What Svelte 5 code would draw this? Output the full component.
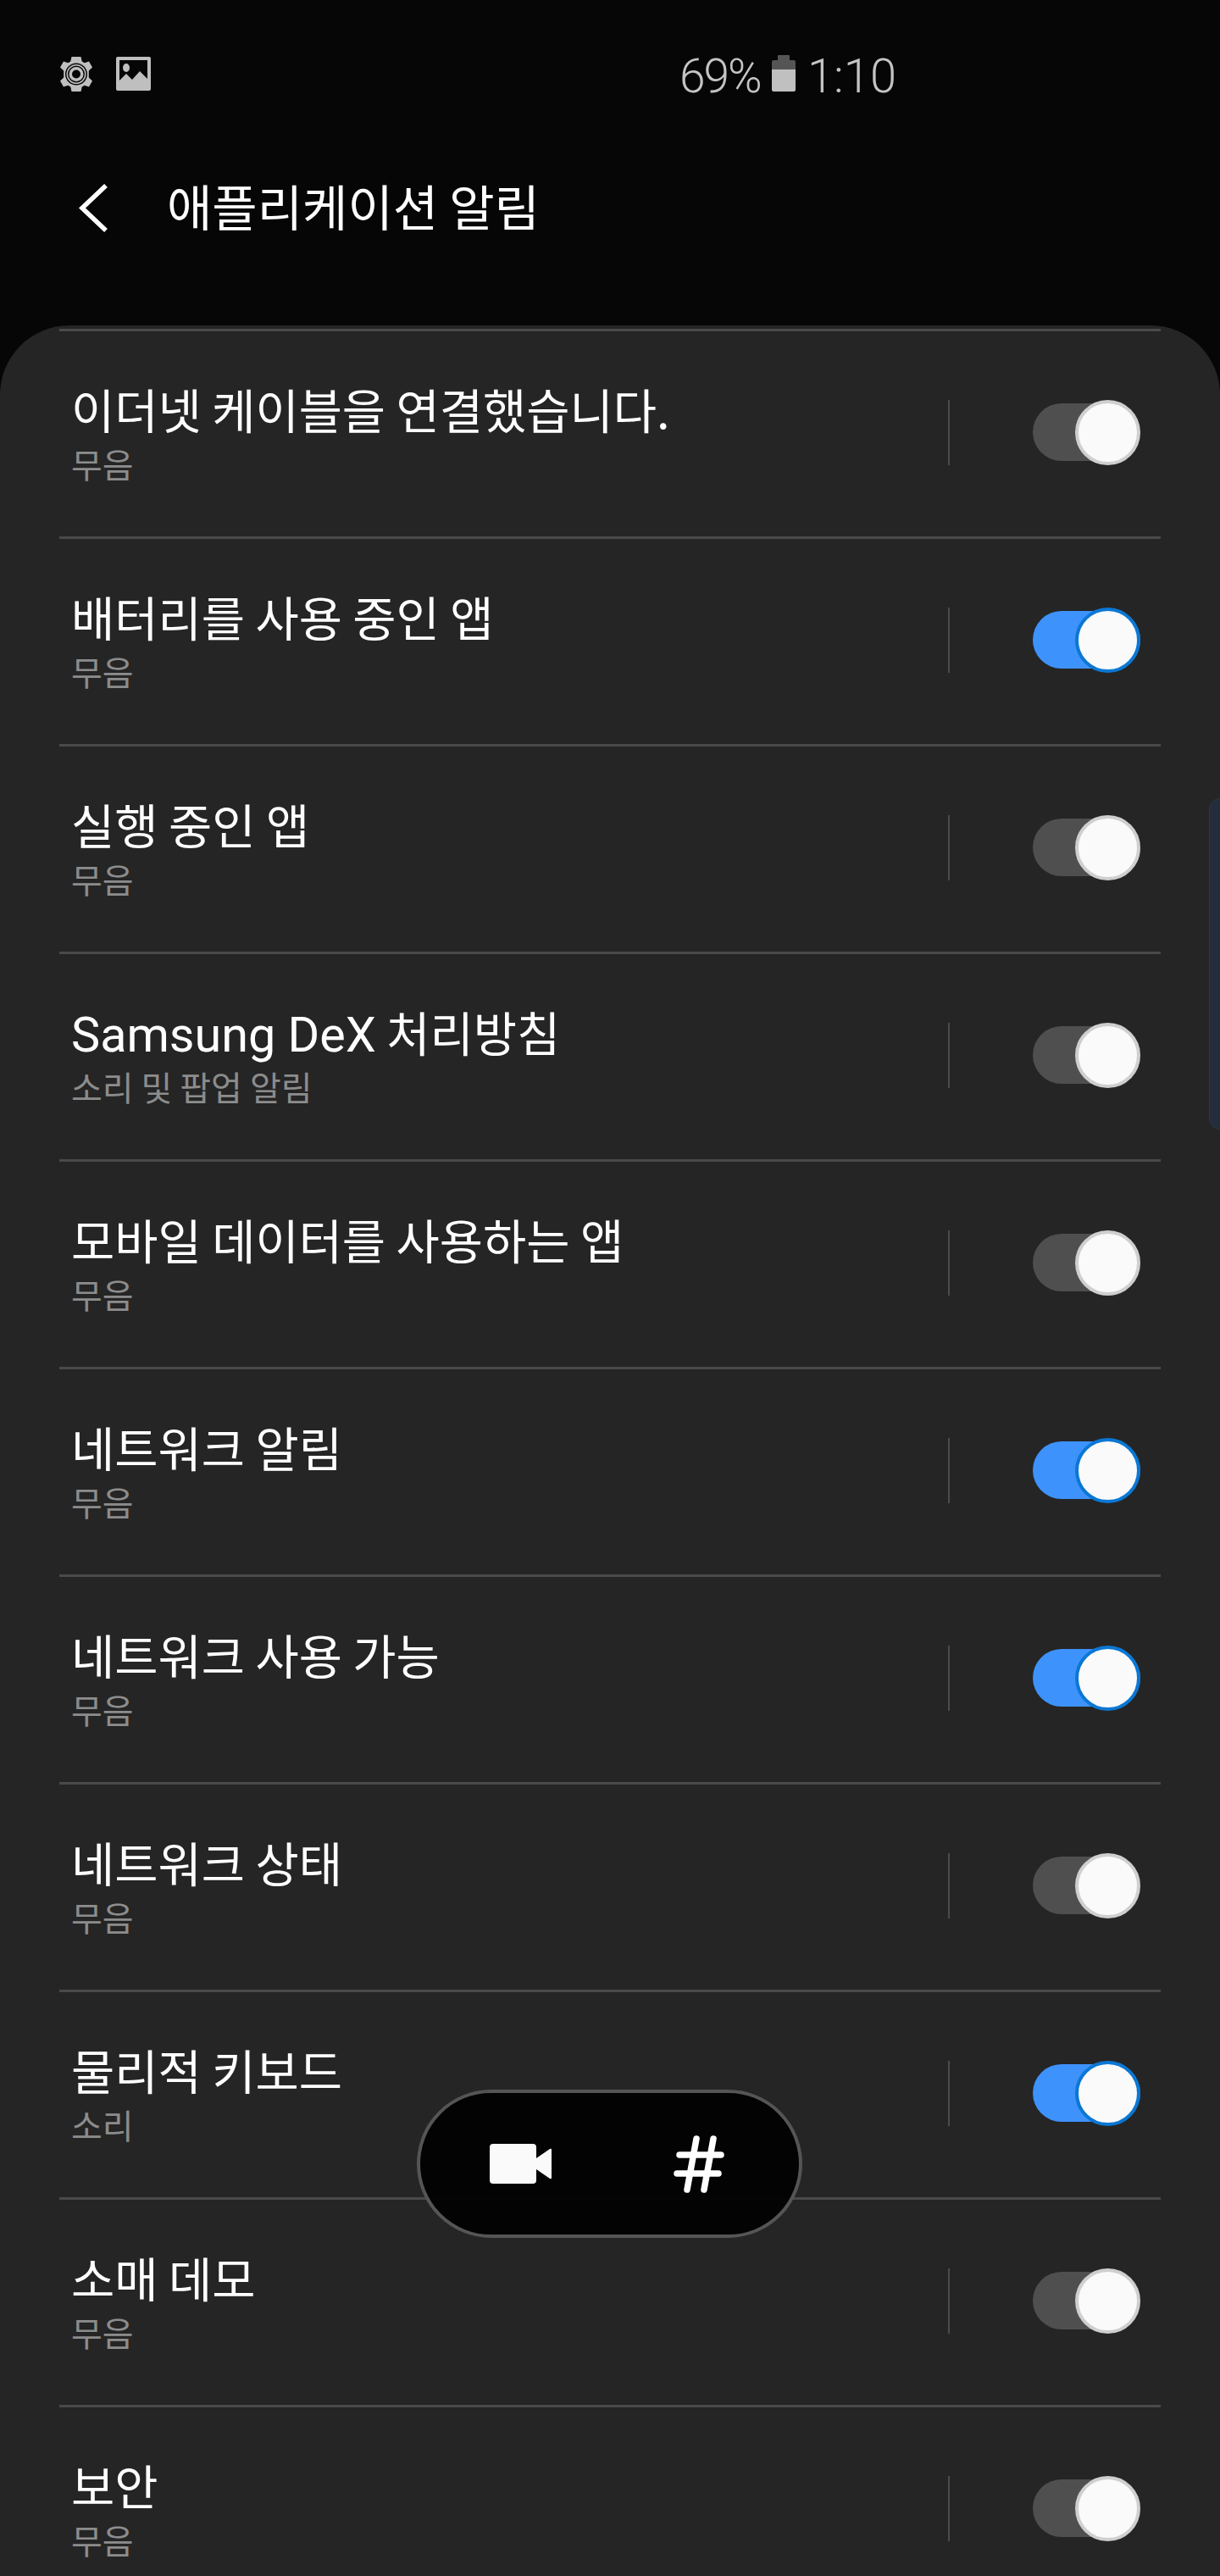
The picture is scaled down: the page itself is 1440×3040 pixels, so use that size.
<script>
  const rows = [
    { title: '이더넷 케이블을 연결했습니다.', sub: '무음', on: false },
    { title: '배터리를 사용 중인 앱', sub: '무음', on: true },
    { title: '실행 중인 앱', sub: '무음', on: false },
    { latin: 'Samsung DeX', title: ' 처리방침', sub: '소리 및 팝업 알림', on: false },
    { title: '모바일 데이터를 사용하는 앱', sub: '무음', on: false },
    { title: '네트워크 알림', sub: '무음', on: true },
    { title: '네트워크 사용 가능', sub: '무음', on: true },
    { title: '네트워크 상태', sub: '무음', on: false },
    { title: '물리적 키보드', sub: '소리', on: true },
    { title: '소매 데모', sub: '무음', on: false },
    { title: '보안', sub: '무음', on: false }
  ];
</script>

<div class="page">
  <div class="status">
    <div class="status-left">
      <svg class="gear" viewBox="0 0 38 41" width="38" height="41">
        <path fill="#bfbfbf" fill-rule="evenodd" d="M13.5 0h11l1.2 5.6 3 1.7L34 5.6l4 7-4.2 3.9v8L38 28.400l-4 7-5.300-1.700-3 1.700L24.500 41h-11l-1.200-5.600-3-1.700L4 35.400l-4-7 4.200-3.900v-8L0 12.600l4-7 5.300 1.700 3-1.700zM19 7.500a13 13 0 1 0 0 26 13 13 0 0 0 0-26z"/>
        <circle cx="19" cy="20.500" r="11.500" fill="#bfbfbf"/>
        <circle cx="19" cy="20.500" r="10" fill="#060606"/>
        <circle cx="19" cy="20.500" r="8.500" fill="#bfbfbf"/>
        <circle cx="19" cy="20.500" r="5" fill="#060606"/>
      </svg>
      <svg class="image" viewBox="0 0 41 40" width="41" height="40">
        <path fill="#bfbfbf" fill-rule="evenodd" d="M2 0h37a2 2 0 0 1 2 2v36a2 2 0 0 1-2 2H2a2 2 0 0 1-2-2V2a2 2 0 0 1 2-2zm2 4v24l8-8 7 7 9-10 9 9V4z"/>
        <ellipse cx="12" cy="13" rx="4" ry="5" fill="#bfbfbf"/>
      </svg>
    </div>
    <div class="status-right">
      <span class="stat pct">69%</span>
      <svg class="battery" viewBox="0 0 28 43" width="28" height="43">
        <path fill="#555" d="M8 0h12a1 1 0 0 1 1 1v5h5a2 2 0 0 1 2 2v9H0V8a2 2 0 0 1 2-2h5V1a1 1 0 0 1 1-1z"/>
        <path fill="#c0c0c0" d="M0 17h28v24a2 2 0 0 1-2 2H2a2 2 0 0 1-2-2z"/>
      </svg>
      <span class="stat time">1:10</span>
    </div>
  </div>

  <header class="bar">
    <svg class="back" viewBox="0 0 34 57" width="34" height="57">
      <path d="M32 2 4 28.500 32 55" fill="none" stroke="#fff" stroke-width="5.500"/>
    </svg>
    <h1>애플리케이션 알림</h1>
  </header>

  <main class="card">
    {#each rows as r}
      <section class="row">
        <div class="text">
          <div class="title">{#if r.latin}<span class="latin">{r.latin}</span>{/if}{r.title}</div>
          <div class="sub">{r.sub}</div>
        </div>
        <div class="vline"></div>
        <div class="toggle" class:on={r.on}><span class="knob"></span></div>
      </section>
    {/each}
  </main>

  <div class="handle"></div>

  <div class="pill">
    <svg viewBox="0 0 73 47" width="73" height="47">
      <path fill="#fafafa" d="M4 0h47a4 4 0 0 1 4 4v39a4 4 0 0 1-4 4H4a4 4 0 0 1-4-4V4a4 4 0 0 1 4-4z"/>
      <path fill="#fafafa" d="M55 17 71 6c1-.6 2 0 2 1v33c0 1-1 1.600-2 1L55 30z"/>
    </svg>
    <svg viewBox="0 0 60 68" width="60" height="68">
      <path fill="none" stroke="#fff" stroke-width="7.500" stroke-linecap="round" d="M27 4 16 64M47 4 36 64M7 23h49M4 45h49"/>
    </svg>
  </div>
</div>

<style>
  :global(body) { margin: 0; background: #060606; }
  .page {
    position: relative;
    width: 1440px;
    height: 3040px;
    overflow: hidden;
    background: #060606;
    color: #fff;
    font-family: "Noto Sans CJK KR", "Noto Sans", sans-serif;
  }
  .status {
    height: 126px;
    display: flex;
    align-items: flex-start;
    box-sizing: border-box;
    padding-top: 65px;
  }
  .status-left {
    width: 802px;
    box-sizing: border-box;
    padding: 2px 0 0 71px;
    display: flex;
    align-items: flex-start;
    gap: 28px;
  }
  .status-right { display: flex; align-items: flex-start; }
  .stat {
    font-family: Roboto, sans-serif;
    font-weight: 300;
    font-size: 55px;
    line-height: 43px;
    height: 43px;
    color: #c4c4c4;
    display: block;
    padding-top: 4px;
  }
  .pct { width: 109px; letter-spacing: -2px; }
  .time { margin-left: 14px; font-size: 56px; }
  .battery { display: block; flex: none; }
  .bar {
    height: 258px;
    box-sizing: border-box;
    padding: 91px 0 0 93px;
    display: flex;
    align-items: flex-start;
  }
  .back { flex: none; display: block; }
  .bar h1 {
    margin: -33px 0 0 70px;
    font-size: 58px;
    font-weight: 400;
    line-height: 116px;
    white-space: nowrap;
  }
  .card {
    height: 2656px;
    box-sizing: border-box;
    background: #252525;
    border-radius: 82px 82px 0 0;
    padding: 4px 70px 0 70px;
  }
  .row {
    height: 245px;
    box-sizing: border-box;
    border-top: 3px solid #4a4a4a;
    display: flex;
    align-items: flex-start;
    padding-top: 81px;
  }
  .text {
    width: 1049px;
    flex: none;
    margin-top: -20px;
    padding-left: 14px;
    box-sizing: border-box;
  }
  .title {
    font-size: 55.7px;
    line-height: 60px;
    height: 60px;
    white-space: pre;
  }
  .latin { font-family: Roboto, sans-serif; font-size: 57.5px; font-weight: 400; line-height: 0; }
  .sub {
    margin-top: 12px;
    font-size: 40px;
    line-height: 46px;
    color: #8c8c8c;
    white-space: pre;
  }
  .vline { width: 2px; height: 77px; background: #4c4c4c; flex: none; margin-right: 98px; }
  .toggle {
    position: relative;
    width: 127px;
    height: 68px;
    margin-top: 4px;
    border-radius: 34px;
    background: #4f4f4f;
    flex: none;
  }
  .toggle.on { background: #3e92fb; }
  .knob {
    position: absolute;
    top: -4px;
    right: 0;
    width: 77px;
    height: 77px;
    box-sizing: border-box;
    border-radius: 50%;
    background: #fafafa;
    border: 4px solid #cfcfcf;
  }
  .on .knob { border-color: #0b77d4; }
  .handle {
    position: absolute;
    top: 942px;
    right: 0;
    width: 13px;
    height: 391px;
    box-sizing: border-box;
    background: #252d3c;
    border: 1px solid #30343c;
    border-right: 0;
    border-radius: 14px 0 0 14px;
  }
  .pill {
    position: absolute;
    left: 492px;
    top: 2466px;
    width: 455px;
    height: 175px;
    box-sizing: border-box;
    border: 4px solid #555;
    border-radius: 88px;
    background: rgba(3, 3, 3, .98);
  }
  .pill svg { position: absolute; display: block; }
  .pill svg:first-child { left: 82px; top: 60px; }
  .pill svg:last-child { left: 299px; top: 50px; }
</style>
